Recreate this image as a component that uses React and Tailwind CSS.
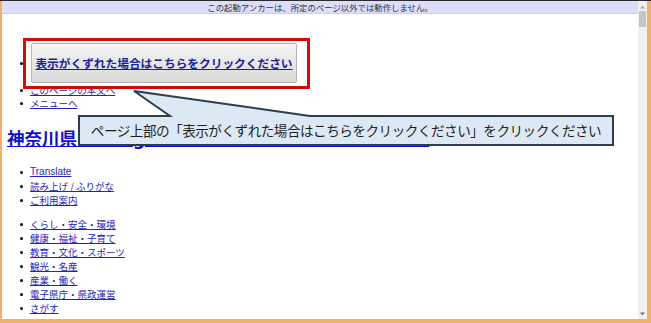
import React from "react";

const jp = { fontFamily: '"Noto Sans CJK JP", "Liberation Sans", sans-serif' };

const Dot = () => <span className="block w-[3px] h-[3px] rounded-full bg-black shrink-0" />;

const LinkItem = ({ children }) => (
  <li className="flex items-center gap-[7px] h-[14px]">
    <Dot />
    <a href="#" className="text-[9.5px] leading-[14px] text-[#2424b8] underline">
      {children}
    </a>
  </li>
);

const App = () => {
  return (
    <div
      className="relative w-[651px] h-[323px] overflow-hidden bg-[#efb06c] border-t border-[#2a2a2a] pl-[2px] pr-[4px] pb-[4px] flex"
      style={jp}
    >
      <div className="flex-1 bg-white flex flex-col overflow-hidden">
        <div className="h-[13px] shrink-0 bg-[#dcdcfb] border-b border-[#cacaf2] flex items-center justify-center text-[8.4px] text-[#333]">
          この起動アンカーは、所定のページ以外では動作しません。
        </div>

        <ul className="pl-[18px] mt-[29px]">
          <li className="flex items-center gap-[8px]">
            <Dot />
            <div className="relative">
              <button className="w-[266px] h-[40px] rounded-[2px] border border-[#b4b4b4] bg-gradient-to-b from-[#f4f4f4] to-[#dadada] flex items-center justify-center">
                <span className="text-[11.7px] font-bold text-[#1d1d9c] underline">
                  表示がくずれた場合はこちらをクリックください
                </span>
              </button>
              <div className="absolute left-[-8px] top-[-5px] right-[-13px] bottom-[-6px] border-[3px] border-[#d30a0a] z-10" />
            </div>
          </li>
          <li className="flex items-center gap-[7px] h-[13px] mt-[1px]">
            <Dot />
            <a href="#" className="text-[9.5px] leading-[13px] text-[#2424b8] underline">
              このページの本文へ
            </a>
          </li>
          <li className="flex items-center gap-[7px] h-[13px]">
            <Dot />
            <a href="#" className="text-[9.5px] leading-[13px] text-[#2424b8] underline">
              メニューへ
            </a>
          </li>
        </ul>

        <h1 className="pl-[5px] mt-[17px] h-[22px] leading-[22px] text-[17.5px] font-bold">
          <a href="#" className="text-[#0f0fd0] underline whitespace-nowrap">
            神奈川県
            <span style={{ fontFamily: '"DejaVu Sans", sans-serif' }}> Kanagawa Prefectural Government</span>
          </a>
        </h1>

        <ul className="pl-[18px] mt-[16px]">
          <li className="flex items-center gap-[7px] h-[14px]">
            <Dot />
            <a
              href="#"
              className="text-[10px] leading-[14px] text-[#2424b8] underline"
              style={{ fontFamily: '"Liberation Sans", sans-serif' }}
            >
              Translate
            </a>
          </li>
          <LinkItem>読み上げ / ふりがな</LinkItem>
          <LinkItem>ご利用案内</LinkItem>
        </ul>

        <ul className="pl-[18px] mt-[10px]">
          <LinkItem>くらし・安全・環境</LinkItem>
          <LinkItem>健康・福祉・子育て</LinkItem>
          <LinkItem>教育・文化・スポーツ</LinkItem>
          <LinkItem>観光・名産</LinkItem>
          <LinkItem>産業・働く</LinkItem>
          <LinkItem>電子県庁・県政運営</LinkItem>
          <LinkItem>さがす</LinkItem>
        </ul>
      </div>

      {/* scrollbar */}
      <div className="w-[9px] bg-[#f0f0f0] flex flex-col items-center">
        <svg width="7" height="6" viewBox="0 0 7 6" className="mt-[3px]">
          <path d="M3.5 1.5 L6 4.5 H1 Z" fill="#a8a8a8" />
        </svg>
        <div className="w-[7px] h-[16px] bg-[#c6c6c6] mt-[1px]" />
        <div className="flex-1" />
        <svg width="7" height="6" viewBox="0 0 7 6" className="mb-[2px]">
          <path d="M1 1.5 H6 L3.5 4.5 Z" fill="#707070" />
        </svg>
      </div>

      {/* callout annotation */}
      <svg className="absolute left-0 top-0 pointer-events-none z-20" width="651" height="323">
        <path
          d="M79 115 H170 L134 90 L310 115 H613 V144 H79 Z"
          fill="#dde8f5"
          stroke="#2d3c4e"
          strokeWidth="2"
          strokeLinejoin="miter"
        />
      </svg>
      <div className="absolute left-[79px] top-[115px] w-[534px] h-[29px] z-30 flex items-center justify-center text-[13.6px] tracking-[-0.5px] text-[#1e1e1e]">
        ページ上部の「表示がくずれた場合はこちらをクリックください」をクリックください
      </div>
    </div>
  );
};

export default App;
